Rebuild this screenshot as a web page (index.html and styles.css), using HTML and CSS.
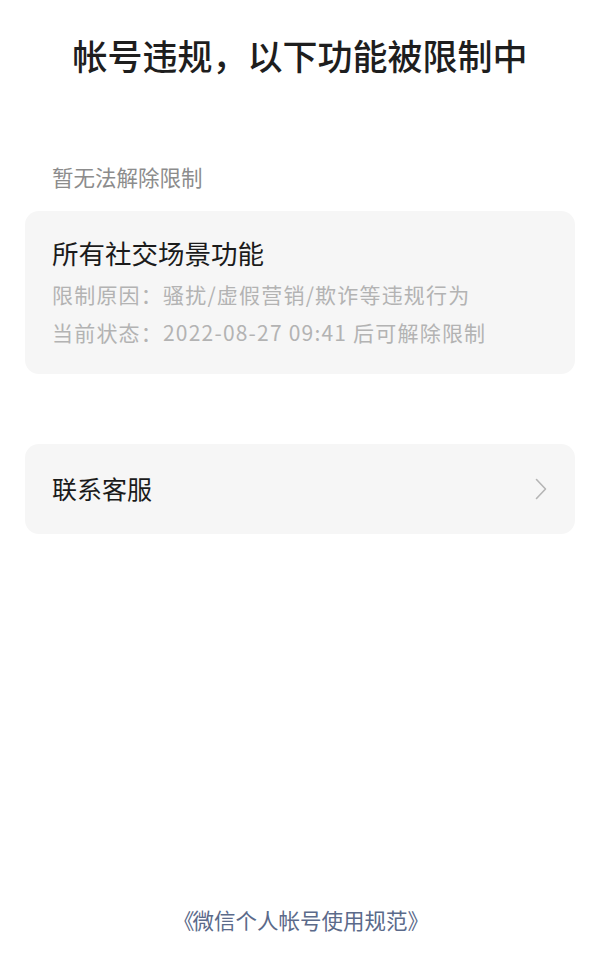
FILE: index.html
```html
<!DOCTYPE html>
<html lang="zh-CN">
<head>
<meta charset="utf-8">
<title>帐号违规</title>
<link rel="stylesheet" href="styles.css">
</head>
<body>
<div class="page">
  <h1 class="title">帐号违规，以下功能被限制中</h1>
  <div class="section-label">暂无法解除限制</div>
  <div class="card">
    <div class="card-title">所有社交场景功能</div>
    <div class="card-line">限制原因：骚扰/虚假营销/欺诈等违规行为</div>
    <div class="card-line">当前状态：2022-08-27 09:41 后可解除限制</div>
  </div>
  <div class="card row">
    <span class="row-text">联系客服</span>
    <svg class="chevron" width="12" height="22" viewBox="0 0 12 22"><path d="M1.5 1.5 L10.5 11 L1.5 20.5" fill="none" stroke="#b5b5b5" stroke-width="1.6" stroke-linejoin="round" stroke-linecap="round"/></svg>
  </div>
  <div class="footer"><span class="br">《</span>微信个人帐号使用规范<span class="br">》</span></div>
</div>
</body>
</html>
```
FILE: styles.css
```css
html, body {
  margin: 0;
  padding: 0;
  background: #ffffff;
}
body {
  font-family: "Noto Sans CJK SC", "Noto Sans", "Liberation Sans", sans-serif;
  color: #1b1b1b;
}
.page {
  min-height: 960px;
  display: flex;
  flex-direction: column;
  box-sizing: border-box;
}
.title {
  margin: 0;
  padding-top: 31px;
  font-size: 35px;
  line-height: 48px;
  font-weight: 500;
  text-align: center;
  color: #1e1e1e;
}
.section-label {
  margin-top: 84px;
  padding-left: 52px;
  font-size: 21.5px;
  line-height: 28px;
  color: #8c8c8c;
}
.card {
  margin: 20px 25px 0;
  background: #f6f6f6;
  border-radius: 14px;
  padding: 24px 27px 23px;
}
.card-title {
  font-size: 26.5px;
  line-height: 36px;
  color: #1b1b1b;
  margin-bottom: 4px;
}
.card-line {
  font-size: 21px;
  line-height: 38px;
  letter-spacing: 1.2px;
  color: #b3b3b3;
  white-space: nowrap;
}
.row {
  margin-top: 70px;
  height: 90px;
  box-sizing: border-box;
  padding: 0 28px 0 27px;
  display: flex;
  align-items: center;
  justify-content: space-between;
}
.row-text {
  font-size: 25px;
  line-height: 34px;
  color: #1b1b1b;
  margin-top: -3px;
}
.chevron {
  display: block;
}
.footer {
  margin-top: auto;
  padding-bottom: 26px;
  text-align: center;
  font-size: 21.5px;
  line-height: 28px;
  color: #5b6a8a;
}
.br {
  letter-spacing: -2px;
}
```
